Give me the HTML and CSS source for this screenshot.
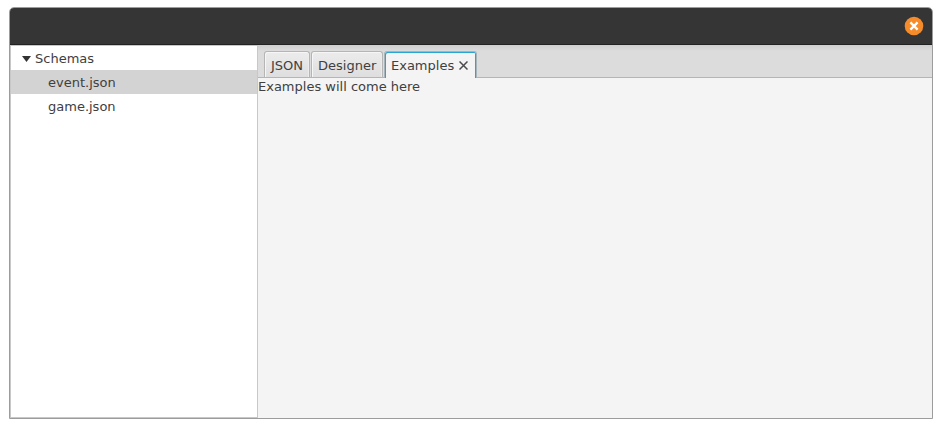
FILE: index.html
```html
<!DOCTYPE html>
<html lang="en">
<head>
<meta charset="utf-8">
<title>Schemas</title>
<link rel="stylesheet" href="styles.css">
</head>
<body>
<div class="window">
  <header class="titlebar">
    <button class="close" aria-label="Close window">
      <svg width="20" height="20" viewBox="0 0 20 20"><circle cx="10" cy="10" r="9.3" fill="#f58b29"/><path d="M6.400 6.400l7.200 7.200M13.600 6.400l-7.200 7.200" stroke="#fff" stroke-width="2.3"/></svg>
    </button>
  </header>
  <div class="content">
    <nav class="tree">
      <div class="row root"><svg class="arrow" width="9" height="6" viewBox="0 0 9 6"><path d="M0 0h9L4.500 6z" fill="#333"/></svg><span>Schemas</span></div>
      <div class="row leaf selected">event.json</div>
      <div class="row leaf">game.json</div>
    </nav>
    <main class="panel">
      <div class="tabs">
        <div class="tab json">JSON</div>
        <div class="tab designer">Designer</div>
        <div class="tab active"><span>Examples</span><svg class="tab-close" width="9" height="9" viewBox="0 0 9 9"><path d="M.5.5l8 8M8.500.5l-8 8" stroke="#4c4c4c" stroke-width="1.5"/></svg></div>
      </div>
      <div class="body">Examples will come here</div>
    </main>
  </div>
</div>
</body>
</html>
```
FILE: styles.css
```css
* { box-sizing: border-box; }
body {
  margin: 0;
  background: #fff;
  color: #404040;
  font: 13px/18px "DejaVu Sans", sans-serif;
}
.window {
  width: 924px;
  height: 412px;
  margin: 7px 0 0 9px;
  border: 1px solid #9c9c9c;
  border-radius: 5px 5px 0 0;
  display: flex;
  flex-direction: column;
  overflow: hidden;
}
.titlebar {
  height: 37px;
  flex: none;
  background: #353535;
  border-bottom: 1px solid #222;
  display: flex;
  justify-content: flex-end;
  align-items: center;
  padding-right: 8px;
}
.close {
  width: 20px;
  height: 20px;
  padding: 0;
  border: 0;
  background: none;
}
.close svg { display: block; }
.content { flex: 1; display: flex; min-height: 0; }
.tree {
  width: 248px;
  flex: none;
  background: #fff;
  border: 1px solid #c8c8c8;
}
.row { height: 24px; line-height: 26px; }
.root { display: flex; align-items: flex-start; gap: 4px; padding-left: 11px; }
.arrow { margin-top: 10px; }
.leaf { padding-left: 37px; }
.selected { background: #d3d3d3; }
.panel { flex: 1; background: #f4f4f4; }
.tabs {
  height: 33px;
  display: flex;
  align-items: flex-end;
  padding-left: 6px;
  gap: 1px;
  background: linear-gradient(#cecece, #dcdcdc 6px);
  border-bottom: 1px solid #b5b5b5;
}
.tab {
  height: 26px;
  line-height: 28px;
  padding: 0 6px;
  border: 1px solid #b5b5b5;
  border-bottom: 0;
  border-radius: 3px 3px 0 0;
  box-shadow: inset 1px 1px #f6f6f6, inset -1px 0 #ececec;
  background: linear-gradient(#ececec, #dedede);
}
.json { width: 46px; }
.designer { width: 72px; }
.active {
  width: 93px;
  height: 27px;
  margin-bottom: -1px;
  padding: 0 5px 0 6px;
  display: flex;
  align-items: flex-start;
  gap: 4px;
  background: #f4f4f4;
  border-color: #a5b5bc;
  box-shadow: inset 1px 1px #2ba6d4, inset -1px 0 #2ba6d4;
}
.tab-close { flex: none; margin: 9px 0 0 1px; }
.body { height: 18px; }
```
